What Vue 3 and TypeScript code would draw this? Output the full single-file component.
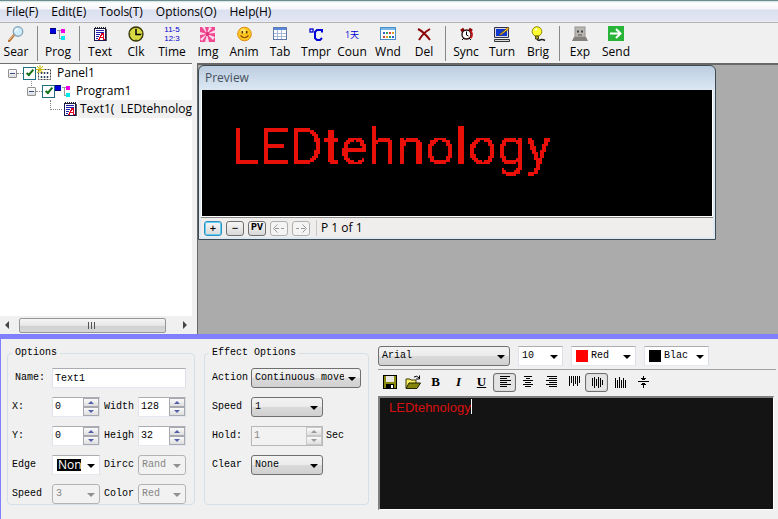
<script setup lang="ts">
import { ref } from 'vue'

interface Tool {
  id: string
  label: string
  group: number
}

const menus = ['File(F)', 'Edit(E)', 'Tools(T)', 'Options(O)', 'Help(H)']

const tools: Tool[] = [
  { id: 'search', label: 'Sear', group: 0 },
  { id: 'program', label: 'Prog', group: 1 },
  { id: 'text', label: 'Text', group: 2 },
  { id: 'clock', label: 'Clk', group: 2 },
  { id: 'time', label: 'Time', group: 2 },
  { id: 'image', label: 'Img', group: 2 },
  { id: 'anim', label: 'Anim', group: 2 },
  { id: 'table', label: 'Tab', group: 2 },
  { id: 'temperature', label: 'Tmpr', group: 2 },
  { id: 'count', label: 'Coun', group: 2 },
  { id: 'window', label: 'Wnd', group: 2 },
  { id: 'delete', label: 'Del', group: 2 },
  { id: 'sync', label: 'Sync', group: 3 },
  { id: 'turn', label: 'Turn', group: 3 },
  { id: 'bright', label: 'Brig', group: 3 },
  { id: 'export', label: 'Exp', group: 4 },
  { id: 'send', label: 'Send', group: 4 },
]
const groups = [0, 1, 2, 3, 4].map((g) => tools.filter((t) => t.group === g))

const panelOn = ref(true)
const programOn = ref(true)
const name = ref('Text1')
const x = ref('0')
const y = ref('0')
const width = ref('128')
const height = ref('32')
const hold = ref('1')
const message = ref('LEDtehnology')

const formats = [
  { id: 'left', pressed: true },
  { id: 'center', pressed: false },
  { id: 'right', pressed: false },
  { id: 'top', pressed: false },
  { id: 'middle', pressed: true },
  { id: 'bottom', pressed: false },
  { id: 'squeeze', pressed: false },
]
</script>

<template>
  <div class="app">
    <svg class="defs" aria-hidden="true">
      <!-- Samples one pixel per 2x2 cell and grows it to fill the cell, like LED dots. -->
      <filter id="led" x="0" y="0" width="100%" height="100%" color-interpolation-filters="sRGB">
        <feComponentTransfer in="SourceGraphic" result="hard">
          <feFuncA type="discrete" tableValues="0 0 1 1" />
        </feComponentTransfer>
        <feFlood x="0" y="0" width="1" height="1" />
        <feComposite width="2" height="2" />
        <feTile result="grid" />
        <feComposite in="hard" in2="grid" operator="in" result="dot" />
        <feOffset in="dot" dx="1" dy="0" result="right" />
        <feMerge result="wide">
          <feMergeNode in="dot" />
          <feMergeNode in="right" />
        </feMerge>
        <feOffset in="wide" dx="0" dy="1" result="low" />
        <feMerge>
          <feMergeNode in="wide" />
          <feMergeNode in="low" />
        </feMerge>
      </filter>
      <symbol id="i-search" viewBox="0 0 16 16">
        <path d="M1 15 6 9" stroke="#b87838" stroke-width="2.6" stroke-linecap="round" />
        <path d="M1 14 6 8.6" stroke="#f0c090" stroke-width="1" />
        <circle cx="10" cy="5.5" r="4.7" fill="#cfeefb" stroke="#8aa8bd" stroke-width="1.4" />
        <path d="M7.4 5.5A3 3 0 0 1 10 2.8" stroke="#fff" stroke-width="1.3" fill="none" />
      </symbol>
      <symbol id="i-program" viewBox="0 0 16 16" shape-rendering="crispEdges">
        <path d="M7 4.5h5M9.5 4v8.500h3" stroke="#999" fill="none" />
        <rect x="0" y="2" width="6" height="6" fill="#0000d8" />
        <path d="M0 2h6v1H0zM0 7h6v1H0z" fill="#000070" />
        <rect x="11" y="3" width="4" height="4" fill="#f000e0" />
        <rect x="11" y="10" width="4" height="4" fill="#00eaea" />
      </symbol>
      <symbol id="i-text" viewBox="0 0 16 16" shape-rendering="crispEdges">
        <path d="M2.500 2.500h11v12h-11z" fill="#fff" stroke="#181850" />
        <path d="M14.500 3v12" stroke="#555" />
        <path d="M3 1.500h11" stroke="#222" stroke-width="2" stroke-dasharray="1 1" />
        <path d="M4 4.500h8M4 6.500h8M4 8.500h4M4 10.500h3M4 12.500h2" stroke="#2020b0" />
        <path d="m7 14 2.500-6h1.500l1 6M8 11.500h4" stroke="#e00020" stroke-width="1.300" fill="none" />
      </symbol>
      <symbol id="i-clock" viewBox="0 0 16 16">
        <circle cx="8" cy="8" r="7" fill="#d8d840" stroke="#333300" stroke-width="1.300" />
        <path d="M8 3v5.500h5" stroke="#000" stroke-width="1.500" fill="none" />
        <path d="M8 1.500v1M8 13.500v1M1.500 8h1M13.500 8h1" stroke="#333" />
      </symbol>
      <symbol id="i-image" viewBox="0 0 16 16">
        <rect x="0" y="1" width="15" height="15" fill="#f04890" />
        <path d="M7 8 2 1h3zM7 8 9 1l3 1zM7 8l8-4v3zM7 8l8 3-2 3zM7 8l2 8H5zM7 8l-5 7-2-2zM7 8 0 9V6z" fill="#ffd8ea" />
        <circle cx="7.500" cy="8" r="2" fill="#e03078" />
      </symbol>
      <symbol id="i-anim" viewBox="0 0 16 16">
        <circle cx="8.500" cy="8" r="6.800" fill="#fcc820" stroke="#e08a10" />
        <circle cx="7" cy="5" r="2.500" fill="#fff08a" opacity=".7" />
        <path d="M6.300 5v2.500M10.700 5v2.500" stroke="#603000" stroke-width="1.500" />
        <path d="M4.500 9.500q4 4.500 8 0" stroke="#904800" stroke-width="1.200" fill="none" />
      </symbol>
      <symbol id="i-table" viewBox="0 0 16 16" shape-rendering="crispEdges">
        <path d="M1.500 1.500h13v12h-13z" fill="#fff" stroke="#6078a8" />
        <rect x="2" y="2" width="12" height="2" fill="#5a8ae0" />
        <path d="M2 7.500h12M2 10.500h12M5.500 4v9M9.500 4v9" stroke="#a8b8d8" />
      </symbol>
      <symbol id="i-temperature" viewBox="0 0 16 16">
        <rect x="2" y="3" width="3" height="3" fill="none" stroke="#0000d8" stroke-width="1.300" />
        <path d="M14 6.500V4H9L7 6v6l2 2h3l2-2" fill="none" stroke="#0000d8" stroke-width="2" />
      </symbol>
      <symbol id="i-window" viewBox="0 0 16 16" shape-rendering="crispEdges">
        <path d="M.500 1.500h15v12H.500z" fill="#fff" stroke="#4a90c8" />
        <rect x="1" y="2" width="14" height="2" fill="#78b8e8" />
        <path d="M3 6h2v2H3zM12 10h2v2h-2z" fill="#3060d0" />
        <path d="M6 6h2v2H6zM9 10h2v2H9z" fill="#30a050" />
        <path d="M9 6h2v2H9zM3 10h2v2H3z" fill="#d04040" />
        <path d="M12 6h2v2h-2zM6 10h2v2H6z" fill="#e0a020" />
      </symbol>
      <symbol id="i-delete" viewBox="0 0 16 16">
        <path d="M2 3q6 3 12 11M14 3Q7 7 3 14" stroke="#8c0808" stroke-width="2" fill="none" />
      </symbol>
      <symbol id="i-sync" viewBox="0 0 16 16">
        <path d="M3 5l3-2M11 3l3 2" stroke="#800" stroke-width="3" />
        <circle cx="8.500" cy="8.500" r="4.500" fill="#fff" stroke="#301010" stroke-width="1.400" />
        <path d="M12 4.500a5 5 0 0 1 .500 7.500" stroke="#c01818" stroke-width="2" fill="none" />
        <path d="M8.500 5.500v3.500l2 1M4 14l2-2M13 14l-2-2" stroke="#000" fill="none" />
      </symbol>
      <symbol id="i-turn" viewBox="0 0 16 16">
        <path d="M.500 1.500h14v10H.500z" fill="#d8d8d8" stroke="#303050" />
        <path d="M2 3h11v7H2z" fill="#1038d0" />
        <path d="M.500 13.500h15v2H.500z" fill="#ddd" stroke="#333" />
        <path d="m5 9 6-5 3-3 1 2-8 6z" fill="#f8c020" stroke="#604000" stroke-width=".600" />
      </symbol>
      <symbol id="i-bright" viewBox="0 0 16 16">
        <circle cx="7" cy="5.500" r="4.800" fill="#ffff30" stroke="#908800" />
        <path d="M5.500 10h3v3h-3z" fill="#b0a820" stroke="#303000" stroke-width=".800" />
        <path d="M7 13q1 2 3 1t5 .500" stroke="#222" stroke-width="1.500" fill="none" />
        <path d="M5 4l2-1" stroke="#fff" stroke-width="1.500" />
      </symbol>
      <symbol id="i-export" viewBox="0 0 16 16">
        <rect x="3" y="1" width="10" height="10" fill="#b8b6b0" stroke="#989490" />
        <path d="M0 15l2-4h12l2 4z" fill="#84807c" />
        <path d="M6 4.500v2M10 4.500v2" stroke="#222" stroke-width="1.500" />
        <path d="M6 9h4" stroke="#555" />
      </symbol>
      <symbol id="i-send" viewBox="0 0 16 16">
        <rect x="0" y="0" width="16" height="15" fill="#28b438" />
        <path d="M2 7.500h11M8 3l4.500 4.500L8 12" fill="none" stroke="#fff" stroke-width="2" />
      </symbol>
      <symbol id="i-panel" viewBox="0 0 16 16">
        <path d="M2.500 4.500h12v10h-12z" fill="#fff" stroke="#444" stroke-dasharray="2 1" />
        <path d="M5.500 7v2M8.500 7v2M11.500 7v2M5.500 11v2M8.500 11v2M11.500 11v2" stroke="#304060" stroke-width="1.500" />
        <path d="M0 4.500h8M4 0v8M1 1l6 7M7 1 1 8" stroke="#c8b800" />
      </symbol>
      <symbol id="a-back" viewBox="0 0 16 13">
        <path d="M6.500 2.500 2.500 6.500l4 4M4 6.500h4M10 6.500h3" fill="none" stroke="#999" />
      </symbol>
      <symbol id="a-next" viewBox="0 0 16 13">
        <path d="M9.500 2.500l4 4-4 4M3 6.500h3M8 6.500h4" fill="none" stroke="#999" />
      </symbol>
      <symbol id="f-save" viewBox="0 0 16 16" shape-rendering="crispEdges">
        <path d="M1 1h14v14H1z" fill="#000" />
        <path d="M2 2h2v6h8V2h2v12H2z" fill="#8a8a10" />
        <path d="M4 2h8v6H4z" fill="#e8e8e0" />
        <path d="M4 10h8v5H4z" fill="#000" /><path d="M9 11h2v3H9z" fill="#fff" />
      </symbol>
      <symbol id="f-open" viewBox="0 0 16 16">
        <path d="M1 14V5h4l1 1h5v3" fill="#f8f060" stroke="#383800" />
        <path d="M1 14.500 4 9h11.500L12 14.500z" fill="#85850c" stroke="#222200" />
        <path d="M9 3q3-2 5 1M14.500 1.500V5H11" fill="none" stroke="#000" />
      </symbol>
      <symbol id="f-left" viewBox="0 0 16 16" shape-rendering="crispEdges">
        <path d="M3 2.500h10M3 4.500h7M3 6.500h11M3 8.500h7M3 10.500h11M3 12.500h7" stroke="#000" />
      </symbol>
      <symbol id="f-center" viewBox="0 0 16 16" shape-rendering="crispEdges">
        <path d="M4 2.500h8M6 4.500h4M3 6.500h10M5 8.500h6M3 10.500h10M5 12.500h6" stroke="#000" />
      </symbol>
      <symbol id="f-right" viewBox="0 0 16 16" shape-rendering="crispEdges">
        <path d="M4 2.500h10M6 4.500h8M3 6.500h11M6 8.500h8M3 10.500h11M6 12.500h8" stroke="#000" />
      </symbol>
      <symbol id="f-top" viewBox="0 0 16 16" shape-rendering="crispEdges">
        <path d="M3.500 2v10M5.500 2v7M7.500 2v10M9.500 2v8M11.500 2v10M13.500 2v7" stroke="#000" />
      </symbol>
      <symbol id="f-middle" viewBox="0 0 16 16" shape-rendering="crispEdges">
        <path d="M3.500 4v8M5.500 3v11M7.500 5v7M9.500 3v11M11.500 4v9M13.500 6v5" stroke="#000" />
      </symbol>
      <symbol id="f-bottom" viewBox="0 0 16 16" shape-rendering="crispEdges">
        <path d="M3.500 4v10M5.500 6v8M7.500 3v11M9.500 6v8M11.500 4v10M13.500 6v8" stroke="#000" />
      </symbol>
      <symbol id="f-squeeze" viewBox="0 0 16 16" shape-rendering="crispEdges">
        <path d="M3 7.500h11M8.500 2v4M8.500 9v5M6 4.500h5M7 5.500h3M7 9.500h3M6 10.500h5" stroke="#000" />
      </symbol>
    </svg>

    <nav class="menubar">
      <button v-for="m in menus" :key="m" type="button">{{ m }}</button>
    </nav>

    <div class="toolbar" role="toolbar">
      <div v-for="(g, i) in groups" :key="i" class="tool-group">
        <button v-for="t in g" :key="t.id" type="button" class="tool">
          <span v-if="t.id === 'time'" class="glyph two-line"><span>11-5</span><span>12:3</span></span>
          <span v-else-if="t.id === 'count'" class="glyph">1天</span>
          <svg v-else class="icon"><use :href="`#i-${t.id}`" /></svg>
          <span>{{ t.label }}</span>
        </button>
      </div>
    </div>

    <main class="workspace">
      <aside class="tree-pane">
        <div class="tree">
          <div class="node">
            <button type="button" class="expander" aria-label="Collapse Panel1"></button>
            <i class="dots"></i>
            <input v-model="panelOn" type="checkbox" aria-label="Panel1" />
            <svg class="icon"><use href="#i-panel" /></svg>
            <span class="node-name">Panel1</span>
          </div>
          <div class="node level-1">
            <button type="button" class="expander" aria-label="Collapse Program1"></button>
            <i class="dots"></i>
            <input v-model="programOn" type="checkbox" aria-label="Program1" />
            <svg class="icon"><use href="#i-program" /></svg>
            <span class="node-name">Program1</span>
          </div>
          <div class="node level-2">
            <i class="elbow"></i>
            <svg class="icon"><use href="#i-text" /></svg>
            <span class="node-name selected">Text1(&nbsp; LEDtehnology</span>
          </div>
        </div>
        <div class="scrollbar">
          <button type="button" class="scroll-left" aria-label="Scroll left"></button>
          <div class="track"><div class="thumb"></div></div>
          <button type="button" class="scroll-right" aria-label="Scroll right"></button>
        </div>
      </aside>

      <section class="mdi">
        <div class="preview">
          <h2>Preview</h2>
          <div class="screen"><span>{{ message }}</span></div>
          <footer>
            <button type="button" class="focus">+</button>
            <button type="button">−</button>
            <button type="button" class="pv">PV</button>
            <button type="button" disabled aria-label="Previous page"><svg class="arrow"><use href="#a-back" /></svg></button>
            <button type="button" disabled aria-label="Next page"><svg class="arrow"><use href="#a-next" /></svg></button>
            <span class="pages">P 1 of 1</span>
          </footer>
        </div>
      </section>
    </main>

    <section class="props">
      <fieldset class="options">
        <legend>Options</legend>
        <label for="name" class="indent">Name:</label>
        <input id="name" v-model="name" class="field wide" />
        <label for="px">X:</label>
        <span class="spin"><input id="px" v-model="x" /><button type="button" class="up" aria-label="Increase X"></button><button type="button" class="down" aria-label="Decrease X"></button></span>
        <label for="pw">Width</label>
        <span class="spin"><input id="pw" v-model="width" /><button type="button" class="up" aria-label="Increase width"></button><button type="button" class="down" aria-label="Decrease width"></button></span>
        <label for="py">Y:</label>
        <span class="spin"><input id="py" v-model="y" /><button type="button" class="up" aria-label="Increase Y"></button><button type="button" class="down" aria-label="Decrease Y"></button></span>
        <label for="ph">Height</label>
        <span class="spin"><input id="ph" v-model="height" /><button type="button" class="up" aria-label="Increase height"></button><button type="button" class="down" aria-label="Decrease height"></button></span>
        <label for="edge">Edge</label>
        <span class="combo flat edge"><select id="edge"><option>Non</option></select></span>
        <label for="dir">Dircc</label>
        <span class="combo off"><select id="dir" disabled><option>Rand</option></select></span>
        <label for="espeed">Speed</label>
        <span class="combo off"><select id="espeed" disabled><option>3</option></select></span>
        <label for="ecolor">Color</label>
        <span class="combo off"><select id="ecolor" disabled><option>Red</option></select></span>
      </fieldset>

      <fieldset class="effects">
        <legend>Effect Options</legend>
        <label for="action">Action</label>
        <span class="combo full"><select id="action"><option>Continuous move</option></select></span>
        <label for="speed">Speed</label>
        <span class="combo"><select id="speed"><option>1</option></select></span>
        <label for="hold" class="start">Hold:</label>
        <span class="spin off"><input id="hold" v-model="hold" disabled /><button type="button" class="up" disabled aria-label="Increase hold"></button><button type="button" class="down" disabled aria-label="Decrease hold"></button></span>
        <span class="unit">Sec</span>
        <label for="clear" class="start">Clear</label>
        <span class="combo"><select id="clear"><option>None</option></select></span>
      </fieldset>

      <div class="editor">
        <div class="font-row">
          <span class="combo font"><select aria-label="Font"><option>Arial</option></select></span>
          <span class="combo flat size"><select aria-label="Font size"><option>10</option></select></span>
          <span class="combo flat swatch red"><select aria-label="Text colour"><option>Red</option></select></span>
          <span class="combo flat swatch black"><select aria-label="Background colour"><option>Blac</option></select></span>
        </div>
        <div class="format-row">
          <button type="button" aria-label="Save"><svg class="icon"><use href="#f-save" /></svg></button>
          <button type="button" aria-label="Open"><svg class="icon"><use href="#f-open" /></svg></button>
          <button type="button" class="letter"><b>B</b></button>
          <button type="button" class="letter"><em>I</em></button>
          <button type="button" class="letter"><u>U</u></button>
          <button v-for="f in formats" :key="f.id" type="button" :class="{ pressed: f.pressed }" :aria-label="f.id">
            <svg class="icon"><use :href="`#f-${f.id}`" /></svg>
          </button>
        </div>
        <div class="text-box">
          <textarea v-model="message" aria-label="Text" spellcheck="false"></textarea>
          <i class="caret"></i>
        </div>
      </div>
    </section>
  </div>
</template>

<style>
body {
  margin: 0;
  background: #f0f0f0;
}
</style>

<style scoped>
.app {
  display: flex;
  flex-direction: column;
  min-height: 100vh;
  background: #f0f0f0;
  color: #000;
  font: 12px/16px "Open Sans", "Noto Sans", "Noto Sans CJK SC", sans-serif;
}
.app *,
.app *::after,
.app *::before {
  box-sizing: border-box;
}
.defs {
  position: absolute;
  width: 0;
  height: 0;
}
button {
  padding: 0;
  border: 0;
  background: none;
  color: inherit;
  font: inherit;
}
.icon {
  display: block;
  flex: none;
  width: 16px;
  height: 16px;
}

.menubar {
  display: flex;
  gap: 13px;
  height: 23px;
  padding: 1px 6px 0;
  border-top: 1px solid #6d8c8e;
  border-bottom: 1px solid #b4b4b4;
  background: linear-gradient(#cfe0e2 0, #fff 2px, #f4f6fb 8px, #dbe0f0 9px, #e2e6f4 20px, #f4f4f4 21px);
}
.menubar button {
  line-height: 20px;
}

.toolbar {
  display: flex;
  height: 40px;
  margin-left: -2px;
  padding-top: 3px;
}
.tool-group {
  display: flex;
}
.tool-group + .tool-group {
  margin: 0 0 2px 3px;
  padding-left: 2px;
  border-left: 1px solid #888;
}
.tool {
  display: flex;
  flex-direction: column;
  align-items: center;
  width: 36px;
  gap: 1px;
  white-space: nowrap;
  line-height: 17px;
}
.glyph {
  display: flex;
  flex-direction: column;
  justify-content: center;
  height: 16px;
  color: #0000d0;
  font-size: 9px;
  line-height: 9px;
}
.two-line {
  font: 8px/9px "Liberation Sans", sans-serif;
}

.workspace {
  display: flex;
  flex: 1;
  min-height: 200px;
}
.tree-pane {
  display: flex;
  flex-direction: column;
  width: 192px;
  border-top: 1px solid #707070;
  background: #fff;
}
.tree {
  flex: 1;
  overflow: hidden;
  padding: 0 0 0 8px;
}
.node {
  display: flex;
  align-items: center;
  height: 18px;
  white-space: nowrap;
}
.level-1 {
  padding-left: 19px;
}
.level-2 {
  padding-left: 42px;
}
.expander {
  position: relative;
  width: 9px;
  height: 9px;
  border: 1px solid #919191;
  border-radius: 1px;
  background: linear-gradient(#3a4c88, #3a4c88) center / 5px 1px no-repeat, linear-gradient(#fff, #dcdcdc);
}
.level-1 .expander::before {
  content: "";
  position: absolute;
  left: 3px;
  bottom: 9px;
  height: 5px;
  border-left: 1px dotted #888;
}
.dots {
  width: 6px;
  border-top: 1px dotted #888;
}
.node input {
  appearance: none;
  width: 13px;
  height: 13px;
  margin: 0;
  border: 1px solid #1c7080;
  background: #fff;
}
.node input:checked::after {
  content: "";
  display: block;
  width: 4px;
  height: 8px;
  margin: 0 0 0 4px;
  border: solid #107018;
  border-width: 0 2px 2px 0;
  transform: rotate(40deg);
}
.node-name {
  padding-left: 5px;
}
.elbow {
  flex: none;
  align-self: flex-start;
  width: 12px;
  height: 10px;
  border: dotted #888;
  border-width: 0 0 1px 1px;
}
.selected {
  flex: 1;
  min-width: 0;
  padding-left: 2px;
  overflow: hidden;
  line-height: 18px;
  background: #f0f0f0;
}
.scrollbar {
  display: flex;
  align-items: center;
  height: 18px;
  background: #f0f0f0;
}
.scrollbar button {
  width: 18px;
  height: 16px;
  background: #444;
  clip-path: polygon(50% 25%, 50% 75%, 28% 50%);
}
.scrollbar .scroll-right {
  clip-path: polygon(50% 25%, 50% 75%, 72% 50%);
}
.track {
  flex: 1;
}
.thumb {
  width: 94%;
  height: 15px;
  margin-left: 1px;
  border: 1px solid #979797;
  border-radius: 2px;
  background: repeating-linear-gradient(90deg, #555 0 1px, transparent 1px 3px) center / 9px 7px no-repeat, linear-gradient(#f5f5f5, #e6e6e6 50%, #cfcfcf 51%, #d8d8d8);
}
.mdi {
  flex: 1;
  margin-left: 5px;
  border-top: 2px solid #686868;
  border-left: 1px solid #686868;
  background: #ababab;
}
.preview {
  width: 518px;
  padding: 0 2px 2px;
  border: 1px solid #3e4a52;
  border-radius: 6px 6px 0 0;
  background: linear-gradient(#bccde0, #dce8f3 24px);
}
.preview h2 {
  margin: 0;
  padding: 0 4px;
  color: #45505e;
  font-size: 12px;
  font-weight: 400;
  line-height: 24px;
}
.screen {
  height: 127px;
  border: 1px solid #fff;
  border-top: 0;
  background: #000;
  overflow: hidden;
}
.screen span {
  display: block;
  padding: 25px 0 0 29px;
  height: 126px;
  color: #e81008;
  font: 400 52px/64px Roboto, "Liberation Sans", sans-serif;
  filter: url(#led);
}
.preview footer {
  display: flex;
  align-items: center;
  gap: 4px;
  height: 20px;
  padding: 1px 3px 0;
  border-top: 1px solid #888;
  background: #f0eeec;
}
.preview footer button {
  width: 18px;
  height: 15px;
  border: 1px solid #707070;
  border-radius: 3px;
  background: linear-gradient(#f6f6f6, #d8d8d8);
  font-size: 11px;
  font-weight: 600;
  line-height: 12px;
}
.preview footer .focus {
  border-color: #2c8cc0;
  box-shadow: inset 0 0 0 1px #62d0f4;
}
.preview footer .pv {
  font: 700 10px/12px "Liberation Mono", monospace;
}
.preview footer button:disabled {
  border-color: #b0b0b0;
  background: #f4f4f4;
}
.arrow {
  display: block;
  width: 16px;
  height: 13px;
}
.pages {
  margin-left: 2px;
  padding-left: 4px;
  border-left: 1px solid #c8c8c8;
}

.props {
  display: flex;
  gap: 9px;
  padding: 7px 2px 9px 6px;
  border-top: 5px solid #8080ff;
  border-left: 1px solid #8080ff;
  font: 10px/14px "Liberation Mono", monospace;
}
fieldset {
  display: grid;
  align-content: start;
  align-items: center;
  min-width: 0;
  margin: 0 0 5px;
  border: 1px solid #d5dfe5;
  border-radius: 4px;
}
legend {
  padding: 0 3px;
}
label {
  overflow: hidden;
  white-space: nowrap;
}
.options {
  grid-template-columns: 36px 48px 30px 48px;
  grid-auto-rows: 20px;
  gap: 9px 4px;
  width: 188px;
  padding: 8px 4px 0;
}
.indent {
  padding-left: 3px;
}
.wide {
  grid-column: 2 / -1;
}
.effects {
  grid-template-columns: 36px 72px 38px;
  grid-auto-rows: 20px;
  gap: 9px 3px;
  width: 165px;
  padding: 8px 7px 0;
}
.effects .start {
  grid-column: 1;
}
.effects .full {
  grid-column: 2 / -1;
  margin-right: 3px;
}
.effects legend {
  margin-left: -3px;
}
.field,
.spin {
  width: 100%;
  min-width: 0;
  height: 20px;
  padding: 0 2px;
  border: 1px solid #abadb3;
  border-color: #abadb3 #dbdfe6 #e3e9ef #e2e3ea;
  background: #fff;
  font: inherit;
}
.spin {
  display: grid;
  grid-template: 9px 9px / 1fr 16px;
  padding: 0;
}
.spin input {
  grid-row: 1 / 3;
  min-width: 0;
  width: 100%;
  padding: 0 2px;
  border: 0;
  background: none;
  color: inherit;
  font: inherit;
}
.spin button {
  border: 1px solid #a8a8b0;
  background: linear-gradient(#fafafa, #dedede);
}
.spin button::after {
  content: "";
  display: block;
  width: 6px;
  height: 3px;
  margin: 0 auto;
  background: #5460a8;
  clip-path: polygon(50% 0, 100% 100%, 0 100%);
}
.spin .down::after {
  clip-path: polygon(0 0, 100% 0, 50% 100%);
}
.spin.off {
  border-color: #b8b8b8;
  background: #f2f2f2;
  color: #888;
}
.spin.off button {
  border-color: #c8c8c8;
}
.spin.off button::after {
  background: #999;
}
.combo {
  position: relative;
  display: block;
  min-width: 0;
  height: 20px;
  border: 1px solid #707070;
  border-radius: 3px;
  background: linear-gradient(#f3f3f3, #ebebeb 50%, #dadada 51%, #d0d0d0);
}
.combo::after {
  content: "";
  position: absolute;
  top: 8px;
  right: 4px;
  width: 8px;
  height: 4px;
  background: #000;
  clip-path: polygon(0 0, 100% 0, 50% 100%);
  pointer-events: none;
}
.combo select {
  appearance: none;
  display: block;
  width: 100%;
  height: 18px;
  padding: 0 16px 0 3px;
  border: 0;
  background: none;
  color: #000;
  font: inherit;
  opacity: 1;
}
.combo.off {
  border-color: #b4b4b4;
  background: #f2f2f2;
}
.combo.off select {
  color: #858585;
}
.combo.off::after {
  background: #909090;
}
.combo.flat {
  border-color: #abadb3 #dbdfe6 #e3e9ef #e2e3ea;
  border-radius: 0;
  background: #fff;
}
.edge select {
  width: 24px;
  height: 12px;
  margin: 3px 0 0 4px;
  padding: 0 0 0 1px;
  background: #000;
  color: #fff;
  font: 12px/12px "Open Sans", sans-serif;
}

.editor {
  display: flex;
  flex: 1;
  flex-direction: column;
  min-width: 0;
}
.font-row {
  display: flex;
  gap: 8px;
  height: 24px;
  border-bottom: 1px solid #a0a0a0;
}
.font {
  width: 132px;
}
.size {
  width: 45px;
}
.swatch {
  width: 65px;
}
.swatch select {
  padding-left: 19px;
}
.swatch::before {
  content: "";
  position: absolute;
  top: 3px;
  left: 4px;
  width: 12px;
  height: 12px;
  background: #000;
}
.red::before {
  background: #f00;
}
.format-row {
  display: flex;
  align-items: center;
  height: 26px;
  padding-bottom: 2px;
}
.format-row button {
  display: flex;
  align-items: center;
  justify-content: center;
  width: 23px;
  height: 19px;
  border: 1px solid transparent;
  border-radius: 3px;
}
.format-row .pressed {
  border-color: #707070;
  background: #e4e4e4;
  box-shadow: inset 0 0 1px #888;
}
.format-row .letter {
  font: 700 13px/16px "Liberation Serif", serif;
}
.text-box {
  position: relative;
  display: flex;
  flex: 1;
  margin-right: 2px;
  border: 1px solid #fff;
  border-top: 2px solid #808080;
  border-left: 2px solid #808080;
}
textarea {
  flex: 1;
  min-height: 90px;
  padding: 2px 9px;
  border: 0;
  resize: none;
  background: #141414;
  color: #d81010;
  font: 13px/16px "Liberation Sans", Arial, sans-serif;
}
.caret {
  position: absolute;
  top: 1px;
  left: 91px;
  width: 1px;
  height: 15px;
  background: #fff;
}
</style>
